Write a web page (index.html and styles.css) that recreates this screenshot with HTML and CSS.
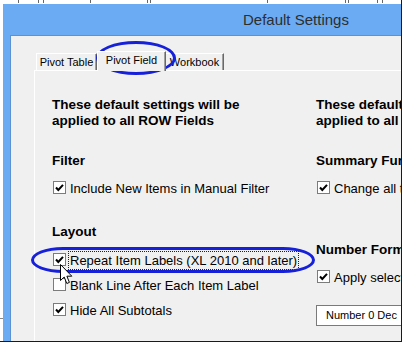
FILE: index.html
```html
<!DOCTYPE html>
<html lang="en">
<head>
    <meta charset="UTF-8">
    <title>Default Settings</title>
    <link rel="stylesheet" href="styles.css">
</head>
<body>
    <div class="shot">
        <div class="window">
            <div class="titlebar">Default Settings</div>
            <div class="client">
                <div class="tabs">
                    <div class="tab">Pivot Table</div>
                    <div class="tab active">Pivot Field</div>
                    <div class="tab">Workbook</div>
                </div>
                <div class="panel">
                    <!-- row fields -->
                    <div class="col">
                        <p class="heading">These default settings will be<br>applied to all ROW Fields</p>
                        <h3 class="group">Filter</h3>
                        <label class="check">
                            <span class="box"><svg viewBox="0 0 11 11"><path d="M2 5.5 L4.3 8 L9 2.8"/></svg></span>
                            <span class="text">Include New Items in Manual Filter</span>
                        </label>
                        <h3 class="group layout">Layout</h3>
                        <label class="check">
                            <span class="box"><svg viewBox="0 0 11 11"><path d="M2 5.5 L4.3 8 L9 2.8"/></svg></span>
                            <span class="text focused">Repeat Item Labels (XL 2010 and later)</span>
                        </label>
                        <label class="check">
                            <span class="box"></span>
                            <span class="text">Blank Line After Each Item Label</span>
                        </label>
                        <label class="check">
                            <span class="box"><svg viewBox="0 0 11 11"><path d="M2 5.5 L4.3 8 L9 2.8"/></svg></span>
                            <span class="text">Hide All Subtotals</span>
                        </label>
                    </div>
                    <!-- value fields -->
                    <div class="col">
                        <p class="heading">These default settings will be<br>applied to all VALUE Fields</p>
                        <h3 class="group">Summary Function</h3>
                        <label class="check">
                            <span class="box"><svg viewBox="0 0 11 11"><path d="M2 5.5 L4.3 8 L9 2.8"/></svg></span>
                            <span class="text">Change all to Sum</span>
                        </label>
                        <h3 class="group number">Number Format</h3>
                        <label class="check">
                            <span class="box"><svg viewBox="0 0 11 11"><path d="M2 5.5 L4.3 8 L9 2.8"/></svg></span>
                            <span class="text">Apply selected format</span>
                        </label>
                        <div class="format-box">Number 0 Dec</div>
                    </div>
                </div>
            </div>
        </div>

        <div class="ring ring-tab"></div>
        <div class="ring ring-option"></div>
        <svg class="cursor" width="13" height="21" viewBox="0 0 13 21">
            <path d="M0.5 0.5 L0.5 16.5 L4.2 13 L6.8 19.5 L9.4 18.4 L6.9 12.2 L11.8 12.2 Z" fill="#fff" stroke="#000" stroke-width="1"/>
        </svg>
    </div>
</body>
</html>
```

FILE: styles.css
```css
* {
    box-sizing: border-box;
}

body {
    margin: 0;
    font-family: "Liberation Sans", Arial, sans-serif;
    color: #000;
    background: #fff;
}

.shot {
    position: relative;
    width: 402px;
    height: 342px;
    padding: 4px 0 0 3px;
    overflow: hidden;
    border-right: 1px solid #1a1a1a;
    border-bottom: 1px solid #1a1a1a;
    background-color: #fff;
    /* bits of the worksheet peeking out behind the dialog */
    background-image:
        linear-gradient(#666, #666), linear-gradient(#666, #666), linear-gradient(#666, #666),
        linear-gradient(#666, #666), linear-gradient(#666, #666), linear-gradient(#666, #666),
        linear-gradient(#666, #666), linear-gradient(#666, #666), linear-gradient(#666, #666),
        linear-gradient(#666, #666), linear-gradient(#666, #666), linear-gradient(#888, #888);
    background-size: 1px 3px, 1px 3px, 1px 3px, 1px 3px, 1px 3px, 1px 3px,
        1px 3px, 1px 3px, 1px 3px, 1px 3px, 1px 3px, 3px 1px;
    background-position: 18px 0, 38px 0, 43px 0, 90px 0, 147px 0, 150px 0,
        267px 0, 345px 0, 348px 0, 377px 0, 382px 0, 0 318px;
    background-repeat: no-repeat;
}

.window {
    display: flex;
    flex-direction: column;
    width: 398px;
    height: 337px;
    overflow: hidden;
    background: #6aabf3;
}

.titlebar {
    height: 31px;
    line-height: 31px;
    padding-left: 240px;
    font-size: 15px;
    color: #2e2e2e;
    white-space: nowrap;
}

.client {
    flex: 1;
    display: flex;
    flex-direction: column;
    margin-left: 7px;
    padding: 15px 0 0 23px;
    background: #f0f0f0;
    border-top: 1px solid #5a92d2;
    border-left: 1px solid #5a92d2;
}

.tabs {
    display: flex;
    align-items: flex-end;
    height: 19px;
    padding-left: 2px;
    font-size: 11px;
}

.tab {
    height: 17px;
    line-height: 16px;
    text-align: center;
    background: #f0f0f0;
    border-top: 1px solid #fff;
    border-left: 1px solid #fff;
    border-right: 1px solid #696969;
    box-shadow: inset -1px 0 #a0a0a0;
    white-space: nowrap;
}

.tab:nth-child(1) {
    width: 61px;
}

.tab.active {
    position: relative;
    z-index: 1;
    width: 69px;
    height: 20px;
    margin-bottom: -1px;
}

.tab:nth-child(3) {
    width: 58px;
    border-left: none;
}

.panel {
    flex: 1;
    display: grid;
    grid-template-columns: 264px 300px;
    padding: 26px 0 0 17px;
    overflow: hidden;
    border-top: 1px solid #fff;
    border-left: 1px solid #fff;
}

.col {
    white-space: nowrap;
}

.heading,
.group {
    margin: 0;
    font-size: 13.5px;
    font-weight: bold;
    line-height: 16px;
}

.group {
    margin: 24px 0 12px;
}

.group.layout {
    margin: 27px 0 13px;
}

.group.number {
    margin: 45px 0 12px;
}

.check {
    display: flex;
    align-items: flex-start;
    gap: 4px;
    margin-left: 1px;
    font-size: 13px;
    line-height: 16px;
}

.check + .check {
    margin-top: 9px;
}

.box {
    width: 13px;
    height: 13px;
    flex: none;
    border: 1px solid #7c7c7c;
    background: #fff;
}

.box svg {
    display: block;
    width: 11px;
    height: 11px;
    fill: none;
    stroke: #000;
    stroke-width: 2;
}

.text.focused {
    margin: -2px -2px -1px -2px;
    padding: 2px 2px 1px 2px;
    outline: 1px dotted #222;
    outline-offset: -1px;
}

.format-box {
    width: 120px;
    height: 21px;
    margin-top: 19px;
    padding-left: 9px;
    border: 1px solid #7a7a7a;
    background: #fff;
    font-size: 11px;
    line-height: 19px;
}

/* hand-drawn annotation rings */
.ring {
    position: absolute;
    border: 3px solid #1520d8;
}

.ring-tab {
    left: 96px;
    top: 41px;
    width: 80px;
    height: 34px;
    border-radius: 50%;
}

.ring-option {
    left: 31px;
    top: 247px;
    width: 284px;
    height: 26px;
    border-radius: 32px / 13px;
}

.cursor {
    position: absolute;
    left: 60px;
    top: 264px;
}
```
